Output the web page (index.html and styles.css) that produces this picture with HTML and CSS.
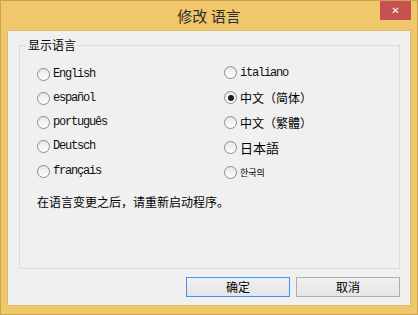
FILE: index.html
```html
<!DOCTYPE html>
<html lang="zh-CN">
<head>
    <meta charset="UTF-8">
    <title>修改 语言</title>
    <link rel="stylesheet" href="styles.css">
</head>
<body>
    <div class="window">
        <!-- Title bar -->
        <div class="titlebar">
            <span></span>
            <span class="title">修改 语言</span>
            <button type="button" class="close-btn">&#x2715;</button>
        </div>

        <!-- Client area -->
        <div class="client">
            <fieldset class="lang-group">
                <legend>显示语言</legend>
                <div class="lang-columns">
                    <div class="col col-left">
                        <label class="option"><span class="radio"></span><span class="latin">English</span></label>
                        <label class="option"><span class="radio"></span><span class="latin">español</span></label>
                        <label class="option"><span class="radio"></span><span class="latin">português</span></label>
                        <label class="option"><span class="radio"></span><span class="latin">Deutsch</span></label>
                        <label class="option"><span class="radio"></span><span class="latin">français</span></label>
                    </div>
                    <div class="col col-right">
                        <label class="option"><span class="radio"></span><span class="latin">italiano</span></label>
                        <label class="option"><span class="radio checked"></span><span class="cjk">中文（简体）</span></label>
                        <label class="option"><span class="radio"></span><span class="cjk">中文（繁體）</span></label>
                        <label class="option"><span class="radio"></span><span class="cjk jp">日本語</span></label>
                        <label class="option"><span class="radio"></span><span class="cjk kr">한국의</span></label>
                    </div>
                </div>
                <p class="note">在语言变更之后，请重新启动程序。</p>
            </fieldset>

            <div class="actions">
                <button type="button" class="btn default">确定</button>
                <button type="button" class="btn">取消</button>
            </div>
        </div>
    </div>
</body>
</html>
```

FILE: styles.css
```css
/* Page */
body {
    margin: 0;
    padding: 0;
    background: #efc76a;
    font-family: "Noto Sans CJK SC", sans-serif;
}

/* Window frame */
.window {
    width: 418px;
    height: 315px;
    box-sizing: border-box;
    border: 1px solid #c9a34f;
    background: #f0c86b;
    display: flex;
    flex-direction: column;
}

/* Title bar */
.titlebar {
    height: 29px;
    display: grid;
    grid-template-columns: 1fr auto 1fr;
}

.title {
    font-size: 15px;
    line-height: 29px;
    color: #2e2e2e;
}

.close-btn {
    justify-self: end;
    align-self: start;
    width: 31px;
    height: 19px;
    margin-right: 6px;
    padding: 0;
    border: none;
    background: #c75050;
    color: #fff;
    font-family: "DejaVu Sans", sans-serif;
    font-size: 10px;
    font-weight: bold;
    line-height: 19px;
}

/* Client area */
.client {
    flex: 1;
    margin: 0 6px 8px 6px;
    border: 1px solid #dcbb6c;
    background: #f0f0f0;
    display: flex;
    flex-direction: column;
}

/* Group box */
.lang-group {
    height: 232px;
    box-sizing: border-box;
    margin: 6px 10px 0 11px;
    padding: 0 0 0 17px;
    border: 1px solid #dcdcdc;
    min-width: 0;
}

.lang-group legend {
    margin-left: -11px;
    padding: 0 2px;
    font-size: 12px;
    line-height: 16px;
    color: #000;
}

.lang-columns {
    display: flex;
    padding-top: 9px;
}

.col {
    display: flex;
    flex-direction: column;
}

.col-left {
    width: 187px;
}

.col-left .option {
    height: 24px;
}

.col-left .option:last-child {
    margin-top: 1px;
}

.col-right {
    margin-top: -2px;
}

.col-right .option {
    height: 25px;
}

/* Radio option */
.option {
    display: flex;
    align-items: center;
    gap: 3px;
    color: #000;
}

.radio {
    width: 11px;
    height: 11px;
    border: 1px solid #8b8b8b;
    border-radius: 50%;
    background: linear-gradient(#e6e6e6, #ffffff);
    display: flex;
    align-items: center;
    justify-content: center;
    flex-shrink: 0;
}

.radio.checked::after {
    content: "";
    width: 6px;
    height: 6px;
    border-radius: 50%;
    background: #1e1e1e;
}

.latin {
    font-family: "Liberation Mono", monospace;
    font-size: 12px;
    letter-spacing: -1.2px;
    color: #111;
}

.cjk {
    font-size: 12px;
}

.cjk.jp {
    font-size: 13px;
}

.cjk.kr {
    font-family: "Noto Sans CJK KR", sans-serif;
    font-size: 9px;
}

/* Restart note */
.note {
    margin: 9px 0 0 0;
    font-size: 12px;
    line-height: 16px;
}

/* Buttons */
.actions {
    display: flex;
    justify-content: flex-end;
    gap: 6px;
    margin: 8px 10px 0 0;
}

.btn {
    width: 104px;
    height: 20px;
    padding: 0;
    border: 1px solid #adadad;
    background: linear-gradient(#f0f0f0, #e5e5e5);
    font-family: "Noto Sans CJK SC", sans-serif;
    font-size: 12px;
    line-height: 18px;
    color: #000;
}

.btn.default {
    border-color: #3399ff;
}
```
